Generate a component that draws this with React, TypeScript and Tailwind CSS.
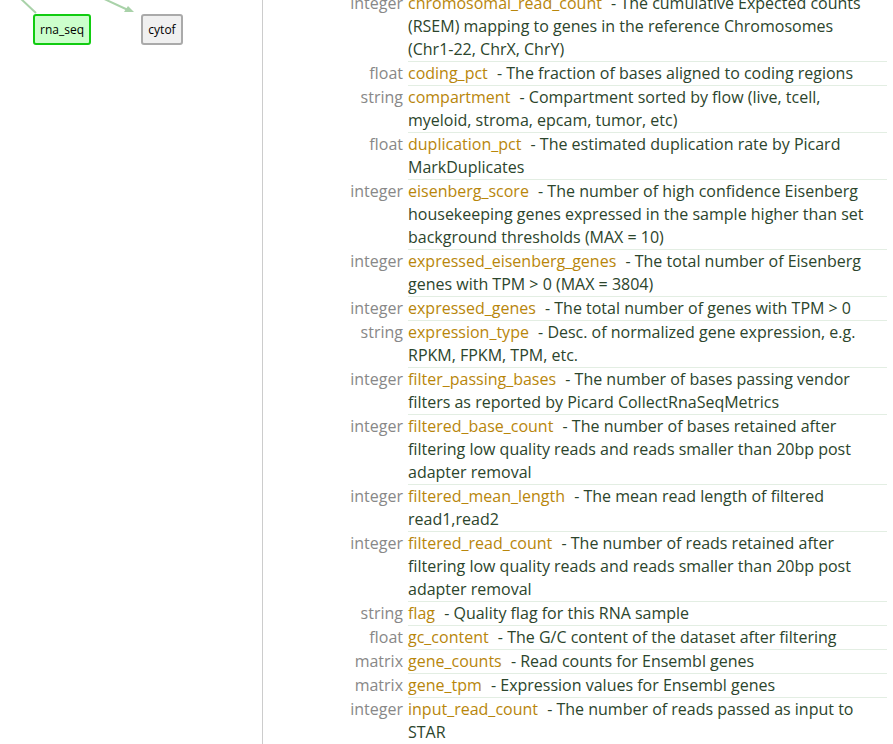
import type { ReactNode } from "react";

const rows: Array<{ type: string; name: string; desc: ReactNode }> = [
  {
    type: "integer",
    name: "chromosomal_read_count",
    desc: (
      <>
        The cumulative Expected counts (RSEM) mapping to genes in the reference Chromosomes{" "}
        <span className="whitespace-nowrap">(Chr1-22,</span> ChrX, ChrY)
      </>
    ),
  },
  { type: "float", name: "coding_pct", desc: "The fraction of bases aligned to coding regions" },
  {
    type: "string",
    name: "compartment",
    desc: "Compartment sorted by flow (live, tcell, myeloid, stroma, epcam, tumor, etc)",
  },
  { type: "float", name: "duplication_pct", desc: "The estimated duplication rate by Picard MarkDuplicates" },
  {
    type: "integer",
    name: "eisenberg_score",
    desc: "The number of high confidence Eisenberg housekeeping genes expressed in the sample higher than set background thresholds (MAX = 10)",
  },
  {
    type: "integer",
    name: "expressed_eisenberg_genes",
    desc: "The total number of Eisenberg genes with TPM > 0 (MAX = 3804)",
  },
  { type: "integer", name: "expressed_genes", desc: "The total number of genes with TPM > 0" },
  {
    type: "string",
    name: "expression_type",
    desc: "Desc. of normalized gene expression, e.g. RPKM, FPKM, TPM, etc.",
  },
  {
    type: "integer",
    name: "filter_passing_bases",
    desc: "The number of bases passing vendor filters as reported by Picard CollectRnaSeqMetrics",
  },
  {
    type: "integer",
    name: "filtered_base_count",
    desc: "The number of bases retained after filtering low quality reads and reads smaller than 20bp post adapter removal",
  },
  { type: "integer", name: "filtered_mean_length", desc: "The mean read length of filtered read1,read2" },
  {
    type: "integer",
    name: "filtered_read_count",
    desc: "The number of reads retained after filtering low quality reads and reads smaller than 20bp post adapter removal",
  },
  { type: "string", name: "flag", desc: "Quality flag for this RNA sample" },
  { type: "float", name: "gc_content", desc: "The G/C content of the dataset after filtering" },
  { type: "matrix", name: "gene_counts", desc: "Read counts for Ensembl genes" },
  { type: "matrix", name: "gene_tpm", desc: "Expression values for Ensembl genes" },
  { type: "integer", name: "input_read_count", desc: "The number of reads passed as input to STAR" },
];

const Graph = () => (
  <div className="relative w-[263px] h-[744px] shrink-0 border-r border-[#cccccc]">
    <svg className="absolute left-0 top-0" width="262" height="60">
      <line x1="20" y1="-2" x2="36" y2="13" stroke="#a9d2a9" strokeWidth="2" />
      <line x1="100" y1="-3" x2="128" y2="10" stroke="#a9d2a9" strokeWidth="2" />
      <polygon points="134,12 124,12 128,6" fill="#a9d2a9" />
    </svg>
    <div className="absolute left-[33px] top-[14px] w-[58px] h-[31px] rounded-[3px] border-2 border-[#11cc11] bg-[#ccffcc] flex items-center justify-center text-[12px] text-black">
      rna_seq
    </div>
    <div className="absolute left-[141px] top-[14px] w-[42px] h-[31px] rounded-[3px] border-2 border-[#aaaaaa] bg-[#f0f0f0] flex items-center justify-center text-[12px] text-black">
      cytof
    </div>
  </div>
);

export default function App() {
  return (
    <div
      className="flex w-[893px] h-[744px] overflow-hidden bg-white"
      style={{ fontFamily: '"Open Sans", sans-serif' }}
    >
      <Graph />
      <div className="flex-1 pr-[6px] mt-[-8px]">
        {rows.map((r) => (
          <div key={r.name} className="flex text-[16px] leading-[23px]">
            <div className="w-[145px] shrink-0 text-right pr-[5px] text-[#888888]">{r.type}</div>
            <div className="flex-1 border-b border-[#e3eee3] text-[#2c452c]">
              <span className="text-[#b8860b] mr-[5px]">{r.name}</span> - {r.desc}
            </div>
          </div>
        ))}
      </div>
    </div>
  );
}
